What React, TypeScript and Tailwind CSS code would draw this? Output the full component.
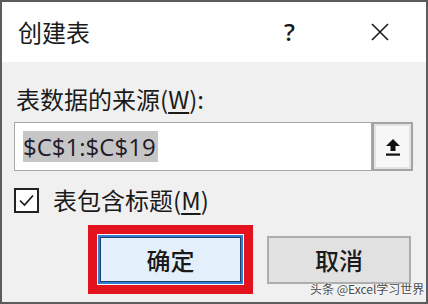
import React from "react"

const cjk = "font-['Noto_Sans_CJK_SC','Noto_Sans',sans-serif]"

function CloseIcon() {
  return (
    <svg width="20" height="20" viewBox="0 0 20 20" fill="none">
      <path d="M2 2 L18 18 M18 2 L2 18" stroke="#1a1a1a" strokeWidth="1.6" />
    </svg>
  )
}

function UploadIcon() {
  return (
    <svg width="18" height="20" viewBox="0 0 18 20" fill="none">
      <path d="M9 2 L2 9 H6.5 V14 H11.5 V9 H16 Z" fill="#111" />
      <rect x="2" y="16.5" width="14" height="2.2" fill="#111" />
    </svg>
  )
}

function CheckIcon() {
  return (
    <svg width="19" height="19" viewBox="0 0 19 19" fill="none">
      <path d="M3 9.5 L7.5 14 L16 4.5" stroke="#1a1a1a" strokeWidth="1.7" />
    </svg>
  )
}

export default function App() {
  return (
    <div className={`${cjk} relative w-[428px] h-[304px] border-2 border-[#5c5c5c] bg-[#f0f0f0] flex flex-col text-[#1a1a1a] overflow-hidden`}>
      {/* title bar */}
      <div className="h-[60px] bg-white flex items-center pl-[16px] shrink-0">
        <span className="text-[24px] leading-none">创建表</span>
        <span className="ml-auto mr-[75px] text-[24px] leading-none font-semibold font-['Open_Sans',sans-serif]">?</span>
        <span className="mr-[36px] flex items-center">
          <CloseIcon />
        </span>
      </div>

      {/* body */}
      <div className="flex-1 flex flex-col pl-[12px] pr-[13px] pt-[22px]">
        <div className="text-[24px] leading-[30px] pl-[2px]">
          表数据的来源(<span className="underline underline-offset-[3px]">W</span>):
        </div>

        <div className="mt-[8px] flex h-[49px]">
          <div className="flex-1 border border-[#a8a8a8] bg-white flex items-center pl-[8px]">
            <span className="bg-[#c6c6c6] text-[24px] leading-[31px] text-[#231a2a] font-['Open_Sans',sans-serif] pr-[2px]">
              $C$1:$C$19
            </span>
          </div>
          <div className="w-[41px] border-2 border-[#a3a3a3] bg-[#e3e3e3] p-[2px] flex">
            <div className="flex-1 bg-[#f7f7f7] flex items-center justify-center">
              <UploadIcon />
            </div>
          </div>
        </div>

        <div className="mt-[15px] flex items-center">
          <div className="w-[25px] h-[25px] border-2 border-[#222] bg-white flex items-center justify-center">
            <CheckIcon />
          </div>
          <span className="ml-[14px] text-[24px] leading-[28px]">
            表包含标题(<span className="underline underline-offset-[3px]">M</span>)
          </span>
        </div>

        <div className="mt-[11px] flex items-center justify-end pr-[2px] gap-[14px]">
          <div className="border-[9px] border-[#e2131c] p-[1px] bg-white">
            <div className="w-[145px] h-[49px] border-2 border-[#2f7fd0] shadow-[inset_0_0_0_1px_#20406e] bg-[#e3f0fb] flex items-center justify-center text-[24px] font-medium">
              确定
            </div>
          </div>
          <div className="w-[144px] h-[48px] border-2 border-[#adadad] bg-[#e1e1e1] flex items-center justify-center text-[24px] font-medium">
            取消
          </div>
        </div>
      </div>

      {/* watermark */}
      <div className="absolute left-[308px] top-[280px] text-[12px] leading-[14px] text-[#4a4a4a] [text-shadow:0_0_2px_#fff,0_0_2px_#fff]">
        头条 @Excel学习世界
      </div>
    </div>
  )
}
